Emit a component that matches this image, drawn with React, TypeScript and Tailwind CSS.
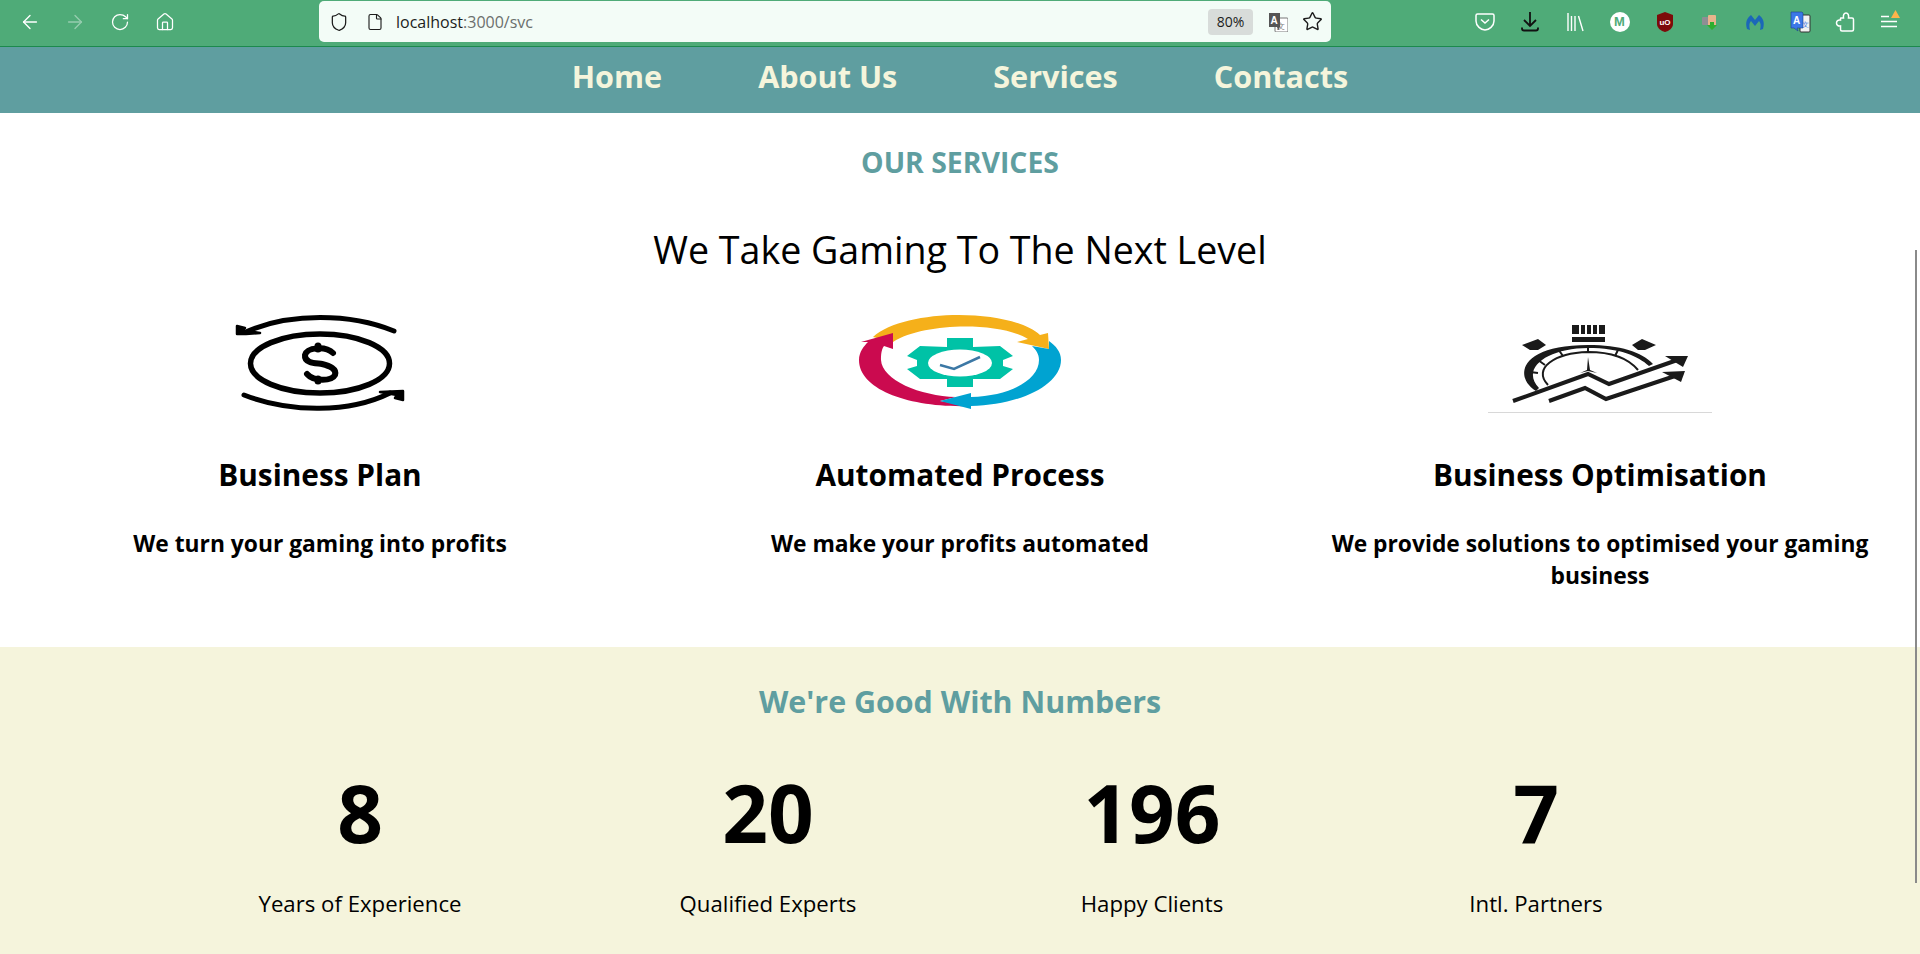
import { ArrowLeft, ArrowRight, RotateCw, Home, Shield, File, Star } from 'lucide-react';
import type { ReactNode } from 'react';

const FONT = "font-['Open_Sans','Noto_Sans',sans-serif]";

const services = [
  { title: 'Business Plan', text: 'We turn your gaming into profits', icon: <MoneyIcon /> },
  { title: 'Automated Process', text: 'We make your profits automated', icon: <GearIcon /> },
  { title: 'Business Optimisation', text: 'We provide solutions to optimised your gaming business', icon: <SpeedIcon /> },
];

const stats = [
  { value: '8', label: 'Years of Experience' },
  { value: '20', label: 'Qualified Experts' },
  { value: '196', label: 'Happy Clients' },
  { value: '7', label: 'Intl. Partners' },
];

function MoneyIcon() {
  return (
    <svg width="240" height="130" viewBox="0 0 240 130" fill="none" stroke="#000">
      <ellipse cx="120" cy="63.5" rx="69.5" ry="29.5" strokeWidth="5.5" />
      <path d="M133 53 C126 46 107 47 105 55 C104 64 118 63 122 64 C130 66 137 69 135 75 C132 81 114 82 107 74" strokeWidth="6" strokeLinecap="round" />
      <path d="M118 46v3M118 79v2" strokeWidth="7" strokeLinecap="round" />
      <path d="M48 31 C90 13 150 13 194 31" strokeWidth="5" strokeLinecap="round" />
      <path d="M37 34 V26 L45 28 L42 30 L60 33 L46 34 Z" fill="#000" stroke="#000" strokeWidth="2.5" strokeLinejoin="round" />
      <path d="M44 95 C90 113 150 113 190 93" strokeWidth="5" strokeLinecap="round" />
      <path d="M203 91 V100 L195 98 L197 95 L180 92 Z" fill="#000" stroke="#000" strokeWidth="2.5" strokeLinejoin="round" />
    </svg>
  );
}

function GearIcon() {
  return (
    <svg width="240" height="130" viewBox="0 0 240 130" fill="none">
      <path d="M33 37 C65 8 170 8 200 35 L208 33 L209 49 L177 42 L188 39 C160 22 85 22 53 42 Z" fill="#f5b01a" />
      <path d="M53 33 L53 49 L44 46 C41 50 41 56 41 60 C42 80 80 96 116 97 L100 101 L130 106 C70 108 19 90 19 60 C19 52 24 46 28 42 L21 42 Z" fill="#cb0a4f" />
      <path d="M100 101 L131 93 V97 C170 96 199 80 199 60 C199 54 196 50 192 46 L209 49 L209 41 C216 46 221 52 221 60 C221 85 180 105 131 106 V109 Z" fill="#00a3d1" />
      <path d="M107 38 H133 V47 L160 46 L173 56 L163 60 V66 L173 69 L160 79 L133 79 V87 H107 V79 L80 79 L67 69 L77 66 V60 L67 56 L80 46 L107 47 Z" fill="#00c2a6" />
      <ellipse cx="120" cy="63" rx="32" ry="13.5" fill="#fff" />
      <path d="M100 65 L114 69 L140 57" stroke="#3c78a5" strokeWidth="2.5" />
    </svg>
  );
}

function SpeedIcon() {
  return (
    <svg width="260" height="130" viewBox="0 0 260 130" fill="none" stroke="#1a1a1a">
      <path d="M102 25h7v9h-7zM111 25h4v9h-4zM117 25h4v9h-4zM123 25h4v9h-4zM129 25h6v9h-6zM102 37h33v5h-33z" fill="#1a1a1a" stroke="none" />
      <path d="M52 45 L68 39 L76 45 L68 50 L60 50 Z M162 45 L172 39 L186 45 L175 50 L168 50 Z" fill="#1a1a1a" stroke="none" />
      <path d="M66 91 C44 78 48 45 118 45 C150 45 172 52 183 64 L179 66 C168 56 150 48 118 48 C78 48 50 68 69 88 Z" fill="#1a1a1a" stroke="none" />
      <path d="M78 85 C62 68 85 53 118 52 C140 52 158 58 168 70" strokeWidth="2" />
      <path d="M118 47v6M88 49l5 7M68 60l7 5M60 72l8 1M148 50l-3 6" strokeWidth="2" />
      <path d="M118 57 L120 70 L127 73 L118 71 L110 73 L117 70 Z" fill="#1a1a1a" stroke="none" />
      <path d="M43 101 L118 74 L139 84 L213 58" strokeWidth="4" />
      <path d="M195 56 L218 56 L213 67 Z" fill="#1a1a1a" stroke="none" />
      <path d="M79 101 L115 88 L136 99 L208 75" strokeWidth="4" />
      <path d="M192 72 L215 71 L211 82 Z" fill="#1a1a1a" stroke="none" />
      <path d="M18 112.5 H242" stroke="#d8d8d8" strokeWidth="1" />
    </svg>
  );
}

function ToolbarSlot({ children }: { children: ReactNode }) {
  return <div className="flex w-[45px] justify-center">{children}</div>;
}

function Toolbar() {
  return (
    <div className="flex h-[47px] items-start border-b border-[#1c8a4d] bg-[#4fab78] pt-[1px]">
      <div className="flex h-[41px] w-[319px] items-center text-white">
        <ArrowLeft size={22} strokeWidth={1.5} className="ml-[19px]" />
        <ArrowRight size={22} strokeWidth={1.5} className="ml-[23px] opacity-40" />
        <RotateCw size={20} strokeWidth={1.5} className="ml-[24px]" />
        <Home size={20} strokeWidth={1.5} className="ml-[25px]" />
      </div>
      <div className="flex h-[41px] w-[1012px] items-center rounded-[5px] bg-[#f3fcf7] text-[#1c1c1c]">
        <Shield size={20} strokeWidth={1.5} className="ml-[10px]" />
        <File size={18} strokeWidth={1.5} className="ml-[17px]" />
        <span className="ml-[12px] font-['Open_Sans',sans-serif] text-[16px]">
          localhost<span className="text-[#6b6f6d]">:3000/svc</span>
        </span>
        <span className="ml-auto flex h-[26px] w-[45px] items-center justify-center rounded-[4px] bg-[#d8dcda] font-['Open_Sans',sans-serif] text-[14px]">80%</span>
        <svg width="20" height="20" viewBox="0 0 20 20" className="ml-[15px]">
          <rect x="7" y="6" width="13" height="14" rx="1" fill="#fff" stroke="#777" />
          <text x="13" y="17" fontSize="8" fill="#777" fontFamily="Liberation Sans" textAnchor="middle">文</text>
          <path d="M1 1h11v14l-2 3-1-3H1z" fill="#555" />
          <text x="6" y="12" fontSize="10" fontWeight="700" fill="#fff" fontFamily="Liberation Sans" textAnchor="middle">A</text>
        </svg>
        <Star size={21} strokeWidth={1.6} className="ml-[14px] mr-[8px]" />
      </div>
      <div className="ml-[131px] flex h-[41px] items-center">
        <ToolbarSlot>
          <svg width="24" height="24" viewBox="0 0 24 24" fill="none" stroke="#fff" strokeWidth="1.5">
            <path d="M3 5.5 Q3 4 4.5 4 H19.5 Q21 4 21 5.5 V11 C21 16 16 20 12 20 C8 20 3 16 3 11 Z" />
            <path d="M8 9.5 L12 13 L16 9.5" />
          </svg>
        </ToolbarSlot>
        <ToolbarSlot>
          <svg width="24" height="24" viewBox="0 0 24 24" fill="none" stroke="#111" strokeWidth="1.8">
            <path d="M12 2V16M6 10l6 6 6-6M4 17.5v1a2 2 0 0 0 2 2h12a2 2 0 0 0 2-2v-1" />
          </svg>
        </ToolbarSlot>
        <ToolbarSlot>
          <svg width="24" height="24" viewBox="0 0 24 24" fill="none" stroke="#fff" strokeWidth="1.4">
            <path d="M5 3V21M8.5 6V21M12 6V21M15.5 6L20 21" />
          </svg>
        </ToolbarSlot>
        <ToolbarSlot>
          <span className="flex h-[20px] w-[20px] items-center justify-center rounded-full bg-white font-['Liberation_Sans',sans-serif] text-[13px] font-bold text-[#4fab78]">M</span>
        </ToolbarSlot>
        <ToolbarSlot>
          <svg width="24" height="24" viewBox="0 0 24 24">
            <path d="M12 2l8 3v9c0 4-4 7-8 8-4-1-8-4-8-8V5z" fill="#7d0a0a" />
            <text x="12" y="15" fontSize="8" fontWeight="700" fill="#fff" fontFamily="Liberation Sans" textAnchor="middle">uO</text>
          </svg>
        </ToolbarSlot>
        <ToolbarSlot>
          <svg width="24" height="24" viewBox="0 0 24 24">
            <rect x="4" y="7" width="8" height="8" rx="1" fill="#8e8e94" />
            <rect x="10" y="5" width="8" height="11" rx="1" fill="#e8b48c" />
            <path d="M9 15h3v-3h4v3h3l-5 5z" fill="#2fae2f" />
          </svg>
        </ToolbarSlot>
        <ToolbarSlot>
          <svg width="24" height="24" viewBox="0 0 24 24">
            <path d="M4 19C2 12 4 8 8 5l4 5 4-5c4 3 6 7 4 14l-3 1c1-4 1-7-1-9l-4 5-4-5c-2 2-2 5-1 9z" fill="#1b67b8" />
          </svg>
        </ToolbarSlot>
        <ToolbarSlot>
          <svg width="24" height="24" viewBox="0 0 24 24">
            <rect x="12" y="5" width="10" height="17" rx="1" fill="#f2f2f2" stroke="#333" />
            <text x="17" y="17" fontSize="7" fill="#3b78e7" fontFamily="Liberation Sans" textAnchor="middle">文</text>
            <path d="M3 2h11l1 1v15H9l1 3-4-3H3z" fill="#3b78e7" stroke="#1d3f8f" strokeWidth=".6" />
            <text x="8.5" y="14" fontSize="10" fontWeight="700" fill="#fff" fontFamily="Liberation Sans" textAnchor="middle">A</text>
          </svg>
        </ToolbarSlot>
        <ToolbarSlot>
          <svg width="24" height="24" viewBox="0 0 24 24" fill="none" stroke="#fff" strokeWidth="1.5">
            <path d="M8 8 H10.5 C10 5 11 3 13 3 C15 3 16 5 15.5 8 H19 Q20.5 8 20.5 9.5 V19.5 Q20.5 21 19 21 H9 Q7.5 21 7.5 19.5 V16 C5 16.5 3.5 15 3.5 13 C3.5 11 5 9.5 7.5 10 V8.5 Q7.5 8 8 8 Z" />
          </svg>
        </ToolbarSlot>
        <ToolbarSlot>
          <svg width="24" height="24" viewBox="0 0 24 24">
            <path d="M3 6.5h8M3 11.5h16M3 16.5h16" stroke="#fff" strokeWidth="1.5" />
            <path d="M17.5 0l4.5 8h-9z" fill="#ffb44a" />
          </svg>
        </ToolbarSlot>
      </div>
    </div>
  );
}

export default function App() {
  return (
    <div className={`relative h-[954px] overflow-hidden bg-white text-black ${FONT}`}>
      <Toolbar />

      <nav className="flex h-[66px] items-center justify-center gap-[96px] bg-[#5f9ea0] pb-[6px] text-[30.6px] font-bold text-[#f5f5dc]">
        <a>Home</a>
        <a>About Us</a>
        <a>Services</a>
        <a>Contacts</a>
      </nav>

      <section className="h-[534px] text-center">
        <h3 className="pt-[31px] text-[28.4px] leading-[36px] font-bold text-[#5f9ea0]">OUR SERVICES</h3>
        <h2 className="mt-[44px] text-[37.6px] leading-[52px]">We Take Gaming To The Next Level</h2>
        <div className="grid grid-cols-3">
          {services.map(s => (
            <div key={s.title} className="flex flex-col items-center px-[40px]">
              <div className="mt-[24px] flex h-[130px] items-center justify-center">{s.icon}</div>
              <h4 className="mt-[25px] text-[29.8px] leading-[40px] font-bold">{s.title}</h4>
              <p className="mt-[33px] text-[22.8px] leading-[32px] font-bold">{s.text}</p>
            </div>
          ))}
        </div>
      </section>

      <section className="h-[307px] bg-[#f5f4dc] text-center">
        <h3 className="pt-[34px] text-[30.4px] leading-[42px] font-bold text-[#5f9ea0]">We're Good With Numbers</h3>
        <div className="mt-[37px] grid grid-cols-[408px_408px_360px_408px] pl-[156px]">
          {stats.map(s => (
            <div key={s.label}>
              <div className="text-[80px] leading-[104px] font-bold">{s.value}</div>
              <div className="mt-[25px] text-[22.2px] leading-[30px]">{s.label}</div>
            </div>
          ))}
        </div>
      </section>

      {/* scrollbar thumb */}
      <div className="absolute top-[250px] right-[3px] h-[633px] w-[2px] bg-[#8a8a8a]" />
    </div>
  );
}
